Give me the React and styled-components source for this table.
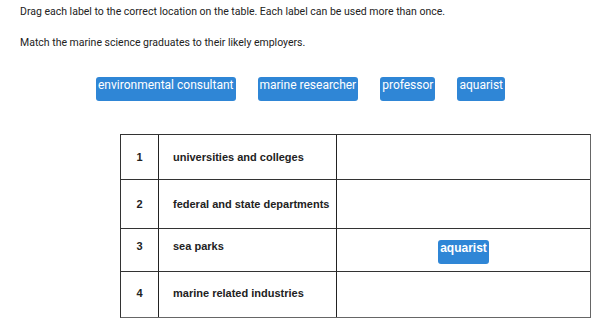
import React from "react";
import styled, { createGlobalStyle } from "styled-components";

const GlobalStyle = createGlobalStyle`
    body {
        margin: 0;
        background: #fff;
        font-family: Roboto, "Liberation Sans", sans-serif;
    }
`;

const Page = styled.div`
    width: 600px;
    height: 333px;
    padding: 5px 0 0 20px;
    box-sizing: border-box;
    color: #222;
`;

const Instruction = styled.p`
    margin: 0 0 ${(p) => p.gap}px;
    font-size: 10.5px;
    line-height: 13px;
`;

const LabelBank = styled.div`
    display: flex;
    gap: 22px;
    margin: 0 0 33px 76px;
`;

const Label = styled.div`
    display: inline-block;
    background: #2f86d6;
    color: #fff;
    font-size: 12px;
    line-height: 15px;
    padding: 1px 2px 8px;
    border-radius: 3px;
    white-space: nowrap;
    margin-top: ${(p) => p.offset || 0}px;
`;

const Table = styled.div`
    width: 469px;
    margin-left: 100px;
    border: 1px solid #333;
    border-right-color: #666;
    border-bottom-color: #666;
    display: grid;
    grid-template-columns: 38px 178px 1fr;
`;

const Cell = styled.div`
    height: ${(p) => p.h}px;
    box-sizing: border-box;
    border-right: ${(p) => (p.last ? "none" : "1px solid #222")};
    border-bottom: ${(p) => (p.bottom ? "none" : "1px solid #333")};
    font-family: "Liberation Sans", Arial, sans-serif;
    font-size: 11px;
    font-weight: bold;
    color: #222;
    display: flex;
    align-items: center;
`;

const NumCell = styled(Cell)`
    justify-content: center;
`;

const TextCell = styled(Cell)`
    padding-left: 14px;
`;

const DropCell = styled(Cell)`
    justify-content: center;
`;

const rows = [
    { n: 1, text: "universities and colleges", h: 45, lift: 0, label: null },
    { n: 2, text: "federal and state departments", h: 49, lift: 0, label: null },
    { n: 3, text: "sea parks", h: 43, lift: 8, label: "aquarist" },
    { n: 4, text: "marine related industries", h: 45, lift: 4, label: null },
];

const labels = ["environmental consultant", "marine researcher", "professor", "aquarist"];

export default function App() {
    return (
        <>
            <GlobalStyle />
            <Page>
                <Instruction gap={18}>
                    Drag each label to the correct location on the table. Each label can be used more than once.
                </Instruction>
                <Instruction gap={28}>Match the marine science graduates to their likely employers.</Instruction>
                <LabelBank>
                    {labels.map((l) => (
                        <Label key={l}>{l}</Label>
                    ))}
                </LabelBank>
                <Table>
                    {rows.map((r, i) => {
                        const bottom = i === rows.length - 1;
                        return (
                            <React.Fragment key={r.n}>
                                <NumCell h={r.h} bottom={bottom} style={{ paddingBottom: r.lift }}>
                                    {r.n}
                                </NumCell>
                                <TextCell h={r.h} bottom={bottom} style={{ paddingBottom: r.lift }}>
                                    {r.text}
                                </TextCell>
                                <DropCell h={r.h} bottom={bottom} last>
                                    {r.label && <Label offset={4}>{r.label}</Label>}
                                </DropCell>
                            </React.Fragment>
                        );
                    })}
                </Table>
            </Page>
        </>
    );
}
